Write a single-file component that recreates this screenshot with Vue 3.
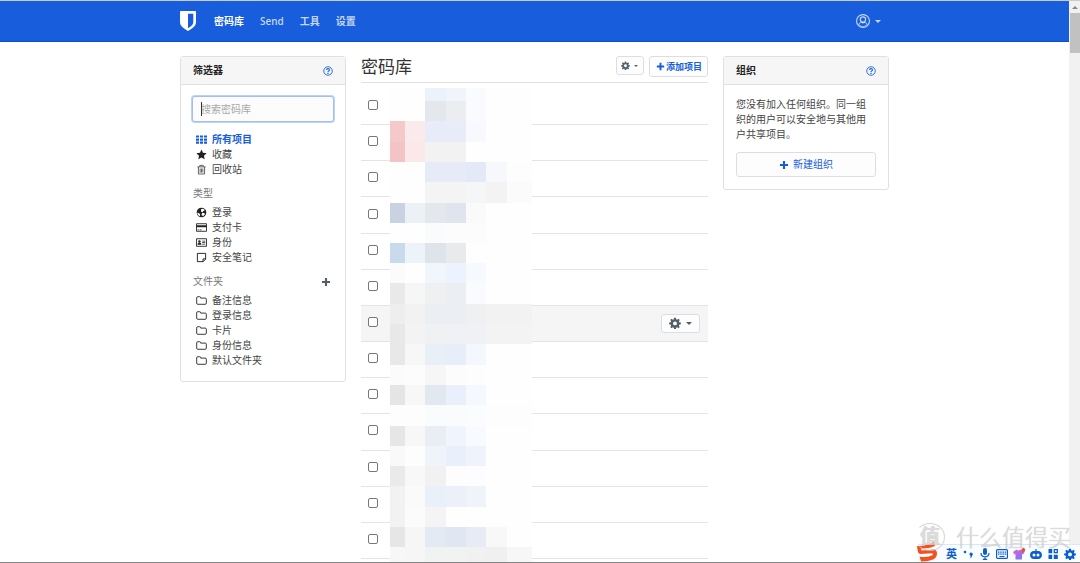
<script setup>
import { ref } from 'vue'

const search = ref('')
const nav = [
  { label: '密码库', active: true },
  { label: 'Send' },
  { label: '工具' },
  { label: '设置' },
]
const mainFilters = [
  { label: '所有项目', icon: 'grid', active: true },
  { label: '收藏', icon: 'star' },
  { label: '回收站', icon: 'trash' },
]
const types = [
  { label: '登录', icon: 'globe' },
  { label: '支付卡', icon: 'card' },
  { label: '身份', icon: 'id' },
  { label: '安全笔记', icon: 'note' },
]
const folders = ['备注信息', '登录信息', '卡片', '身份信息', '默认文件夹']
const rows = Array.from({ length: 13 }, (_, i) => ({ id: i + 1, hover: i === 6 }))

// Privacy mosaic over the item names
const xs = [0, 15, 35, 56, 76, 96, 117, 142]
const ys = [0, 13, 33, 54, 74, 94, 115, 135, 155, 175, 195, 216, 236, 256, 277, 297, 317, 338, 358, 378, 398, 419, 439, 459, 475]
const w = 'fefefe'
const colors = [
  [w, w, 'ecf2fb', 'f1f4fa', 'f9fbfe', w, w],
  [w, w, 'e4e8ec', 'ebedf1', 'f9fbfe', w, w],
  ['f5c8ca', 'fbeaeb', 'e7ecf8', 'e7ecf8', 'f7f9fe', w, w],
  ['f4c3c5', 'fbe8e9', 'f2f2f2', 'f2f2f2', w, w, w],
  [w, w, 'e6ebf7', 'e6ebf7', 'e3e9f6', 'f6f8fb', 'fdfdfe'],
  [w, w, 'f4f4f4', 'f4f4f5', 'f5f6f8', 'f3f3f3', 'fbfbfb'],
  ['c9d2e3', 'ecf1f6', 'e4e8ed', 'dfe4ef', 'fafafb', w, w],
  [w, w, 'fafbfc', 'fcfcfd', 'fcfcfd', w, w],
  ['c8daeb', 'edf4f9', 'dfe4ea', 'e9eaec', w, w, w],
  ['fbfbfb', w, 'f1f5fc', 'edf3fe', 'f6f9fe', w, w],
  ['e9e9e9', 'f6f6f6', 'eff0f1', 'ebeef2', 'fafbfe', w, w],
  ['eeeeee', 'f2f2f2', 'ebeef3', 'ebeef3', 'eff0f2', 'f2f2f2', 'f2f2f2'],
  ['e8e8e8', 'f3f3f3', 'f0f1f3', 'f0f1f4', 'eff1f4', 'f3f3f3', 'f3f3f3'],
  ['e8e8e8', 'f7f7f7', 'e9eff7', 'e7edf9', 'f4f7fd', w, w],
  ['fbfbfb', 'fcfcfc', 'f6f6f6', 'fcfcfc', 'fdfdfd', w, w],
  ['e5e5e5', 'f7f7f7', 'e2e8f0', 'e9effb', 'f5f8fe', w, w],
  ['fdfdfd', 'fdfdfd', 'fafbfd', 'fafbfd', 'fbfcfd', 'fdfdfd', 'fdfdfd'],
  ['e6e6e6', 'f7f7f7', 'eaedf3', 'f0f4fd', 'f8faff', w, w],
  ['f9f9f9', 'fdfdfd', 'eff3fa', 'e9effb', 'eff3fb', w, w],
  ['eaeaea', 'f8f8f8', 'f1f1f1', 'fdfdfd', 'fdfdff', w, w],
  ['f2f2f2', 'fafafa', 'eaf0f9', 'ebf0f9', 'eff4fa', w, w],
  ['f2f2f2', 'fbfbfb', 'f4f4f4', w, w, w, w],
  ['e6e6e6', 'f6f6f6', 'e4eaf3', 'e1e7f2', 'e6ebf5', 'f8f8f8', w],
  ['f7f7f7', 'f6f6f6', 'f1f2f2', 'f1f2f2', 'f1f1f1', 'f0f0f0', 'f7f7f7'],
]
const cells = colors.flatMap((row, r) =>
  row.map((c, i) => ({ key: r * 7 + i, x: xs[i], y: ys[r], w: xs[i + 1] - xs[i], h: ys[r + 1] - ys[r], fill: '#' + c })),
)
</script>

<template>
  <div class="window">
    <svg class="defs" aria-hidden="true">
      <symbol id="i-grid" viewBox="0 0 16 16"><path d="M0 2h4.400v3.200H0zM5.800 2h4.400v3.200H5.800zM11.600 2H16v3.200h-4.400zM0 6.500h4.400v3.200H0zM5.800 6.500h4.400v3.200H5.800zM11.600 6.500H16v3.200h-4.400zM0 11h4.400v3.200H0zM5.800 11h4.400v3.200H5.800zM11.600 11H16v3.200h-4.400z" /></symbol>
      <symbol id="i-star" viewBox="0 0 16 16"><path d="M8 .8l2.200 4.800 5.300.6-3.900 3.600 1 5.200L8 12.400 3.400 15l1-5.200L.5 6.200l5.300-.6z" /></symbol>
      <symbol id="i-trash" viewBox="0 0 16 16"><path d="M2 4.200h12M5.500 4V2h5v2M3.500 4.500v10h9v-10M6 6.500v6M8 6.500v6M10 6.500v6" fill="none" stroke="currentColor" stroke-width="1" /></symbol>
      <symbol id="i-globe" viewBox="0 0 16 16"><circle cx="8" cy="8" r="7" /><path d="M7.500 3l3-.6 2.500 2-2.200 1.400-1.500 2-1.500-.6-.5-2zM9.500 8.500l3 .5.500 1.500-2.500 2.700-2-.7-.5-2zM2 8l2.500 1 1.500 2-.5 2.500C3.500 12.500 2 10.500 2 8z" fill="#fff" /></symbol>
      <symbol id="i-card" viewBox="0 0 16 16"><path d="M.7 2.500h14.600v11H.7z" fill="none" stroke="currentColor" stroke-width="1.300" /><path d="M.7 4.800h14.600v2.800H.7zM2.300 10.800h2v1.200h-2zM5.200 10.800h3v1.200h-3z" /></symbol>
      <symbol id="i-id" viewBox="0 0 16 16"><path d="M.7 2.500h14.600v11H.7z" fill="none" stroke="currentColor" stroke-width="1.300" /><circle cx="5" cy="6.500" r="1.800" /><path d="M2.300 11.300V9.500L4 8.300h2l1.700 1.200v1.800zM9 5.500h4.500v1H9zM9 7.600h4.500v1H9zM9 9.800h4.500v1H9z" /></symbol>
      <symbol id="i-note" viewBox="0 0 16 16"><path d="M2 2h12v8.500L10.500 14H2zM14 10h-3.800v4" fill="none" stroke="currentColor" stroke-width="1.400" stroke-linejoin="round" /></symbol>
      <symbol id="i-folder" viewBox="0 0 16 16"><path d="M1 4q0-1.500 1.500-1.500H5.500Q6.800 2.500 6.800 4v.5h6.700Q15 4.500 15 6v6q0 1.500-1.500 1.500h-11Q1 13.500 1 12z" fill="none" stroke="currentColor" stroke-width="1.300" /></symbol>
      <symbol id="i-plus" viewBox="0 0 16 16"><path d="M6.300 1.500h3.400v4.800h4.800v3.400H9.700v4.800H6.300V9.700H1.500V6.300h4.800z" /></symbol>
      <symbol id="i-help" viewBox="0 0 16 16"><circle cx="8" cy="8" r="6.800" fill="none" stroke="currentColor" stroke-width="1.400" /><path d="M5.700 6.400C5.800 3.300 10.400 3.500 10.300 6.200 10.200 7.700 8.100 7.800 8 9.500" fill="none" stroke="currentColor" stroke-width="1.800" /><path d="M7 10.700h2v2H7z" /></symbol>
      <symbol id="i-gear" viewBox="0 0 16 16"><path fill-rule="evenodd" d="M6.800 1h2.400l.4 2 1.300.6 1.800-1.200 1.600 1.700-1.100 1.700.5 1.200 2.100.4v2.400l-2.100.4-.5 1.300 1.100 1.700-1.600 1.700-1.800-1.200-1.300.5-.4 2.100H6.800l-.4-2.100-1.300-.5-1.800 1.200-1.600-1.700 1.100-1.700-.5-1.300L.2 9.800V7.400L2.300 7l.5-1.200-1.100-1.700 1.600-1.700 1.800 1.200L6.400 3zM8 5.900a2.600 2.600 0 1 0 0 5.200 2.600 2.600 0 0 0 0-5.200z" /></symbol>
      <symbol id="i-user" viewBox="0 0 16 16"><circle cx="8" cy="8" r="8" /><circle cx="8" cy="8" r="6.700" fill="#175ddc" /><path d="M8 2.600c4.800 0 4.400 5.600 2.200 6.800 1.700.3 2.700 1.300 3 2.700-2.600 3.400-7.800 3.400-10.400 0 .3-1.400 1.300-2.400 3-2.700C3.600 8.200 3.200 2.600 8 2.600z" /><circle cx="8" cy="6.300" r="2.300" fill="#175ddc" /><path d="M3.800 12.300c.4-1.500 1.300-1.900 2.300-1.900q1.900.9 3.800 0c1 0 1.900.4 2.300 1.900-2.400 2.100-6 2.100-8.400 0z" fill="#175ddc" /></symbol>
    </svg>

    <div class="page">
      <header class="navbar">
        <div class="container bar">
          <a class="logo" href="#" aria-label="Bitwarden">
            <svg viewBox="0 0 16 20"><path d="M.7 0h14.600q.7 0 .7.700V11c0 4-3.500 6.500-8 9-4.500-2.500-8-5-8-9V.7Q0 0 .7 0z" fill="#fff" /><path d="M8 2.800h5.300V11c0 2.300-1.800 4-5.300 6.200z" fill="#175ddc" /></svg>
          </a>
          <nav>
            <a v-for="n in nav" :key="n.label" href="#" :class="{ active: n.active }">{{ n.label }}</a>
          </nav>
          <button class="account" type="button" aria-label="账户">
            <svg><use href="#i-user" /></svg><span class="caret"></span>
          </button>
        </div>
      </header>

      <main class="container columns">
        <aside class="card">
          <div class="card-header">
            <h2>筛选器</h2>
            <a href="#" aria-label="帮助"><svg class="icon"><use href="#i-help" /></svg></a>
          </div>
          <div class="filters">
            <div class="search-box">
              <input v-model="search" class="search" type="text" placeholder="搜索密码库" aria-label="搜索密码库" />
              <span class="cursor"></span>
            </div>
            <ul>
              <li v-for="f in mainFilters" :key="f.label">
                <a href="#" :class="{ active: f.active }"><svg class="icon"><use :href="'#i-' + f.icon" /></svg>{{ f.label }}</a>
              </li>
            </ul>
            <h3>类型</h3>
            <ul>
              <li v-for="t in types" :key="t.label">
                <a href="#"><svg class="icon"><use :href="'#i-' + t.icon" /></svg>{{ t.label }}</a>
              </li>
            </ul>
            <h3>文件夹
              <button type="button" aria-label="添加文件夹"><svg class="icon"><use href="#i-plus" /></svg></button>
            </h3>
            <ul>
              <li v-for="f in folders" :key="f">
                <a href="#"><svg class="icon"><use href="#i-folder" /></svg>{{ f }}</a>
              </li>
            </ul>
          </div>
        </aside>

        <section class="vault">
          <div class="vault-header">
            <h1>密码库</h1>
            <button class="btn small" type="button" aria-label="选项"><svg class="icon"><use href="#i-gear" /></svg><span class="caret"></span></button>
            <button class="btn add" type="button"><svg class="icon"><use href="#i-plus" /></svg>添加项目</button>
          </div>
          <div class="items">
            <div v-for="r in rows" :key="r.id" class="item" :class="{ hover: r.hover }">
              <input type="checkbox" :aria-label="'选择项目 ' + r.id" />
              <button v-if="r.hover" class="btn options" type="button" aria-label="项目选项"><svg><use href="#i-gear" /></svg><span class="caret"></span></button>
            </div>
            <svg class="mosaic" width="142" height="475" shape-rendering="crispEdges" aria-hidden="true">
              <rect v-for="c in cells" :key="c.key" :x="c.x" :y="c.y" :width="c.w" :height="c.h" :fill="c.fill" />
            </svg>
          </div>
        </section>

        <aside class="card">
          <div class="card-header">
            <h2>组织</h2>
            <a href="#" aria-label="帮助"><svg class="icon"><use href="#i-help" /></svg></a>
          </div>
          <div class="org">
            <p>您没有加入任何组织。同一组织的用户可以安全地与其他用户共享项目。</p>
            <button class="btn new-org" type="button"><svg class="icon"><use href="#i-plus" /></svg>新建组织</button>
          </div>
        </aside>
      </main>
    </div>

    <div class="scrollbar"><span class="arrow"></span><span class="thumb"></span></div>

    <div class="ime">
      <span class="lang">英</span>
      <svg viewBox="0 0 12 12"><circle cx="3" cy="4" r="1.300" /><path d="M7.500 6a1.600 1.600 0 1 1 2.800 1.200Q10 9.500 7.800 10.500q1-1.500.8-2.500Q7.500 7.500 7.500 6z" /></svg>
      <svg viewBox="0 0 12 12"><rect x="4" y="0" width="4" height="7" rx="2" /><path d="M2 5c0 5 8 5 8 0M6 8.500V12M3.800 11.300h4.400" fill="none" stroke="currentColor" stroke-width="1.200" /></svg>
      <svg viewBox="0 0 12 12"><rect x=".6" y="1.600" width="10.800" height="8.800" rx="1" fill="none" stroke="currentColor" stroke-width="1.200" /><path d="M2 3.400h1.500v1.300H2zM4.200 3.400h1.500v1.300H4.200zM6.400 3.400h1.500v1.300H6.400zM8.600 3.400h1.500v1.300H8.600zM2 5.500h1.500v1.300H2zM4.200 5.500h1.500v1.300H4.200zM6.400 5.500h1.500v1.300H6.400zM8.600 5.500h1.500v1.300H8.600zM3.500 7.900h5V9h-5z" /></svg>
      <svg viewBox="0 0 12 12"><defs><linearGradient id="shirt" x1="0" x2="1" y1="0" y2="1"><stop offset="0" stop-color="#f064b4" /><stop offset=".6" stop-color="#9b6cf2" /><stop offset="1" stop-color="#4c9cf5" /></linearGradient></defs><path d="M3.500 1.500q2 2 4 0L11.500 4 10 6.500 9 6v5.500H2.500V6L1.300 6.500 0 4z" fill="url(#shirt)" /><circle cx="10.300" cy="2" r="1.900" fill="#f04a2c" /></svg>
      <svg viewBox="0 0 12 12"><path d="M5.400 1h1.200v2H8c5.300 0 5.300 8 0 8H4c-5.300 0-5.300-8 0-8h1.400z" /><circle cx="4" cy="7" r="1.500" fill="#fff" /><circle cx="8" cy="7" r="1.500" fill="#fff" /></svg>
      <svg viewBox="0 0 12 12"><path d="M1.500 1h3.700v4.200H1.500zM1.500 6.800h3.700V11H1.500zM6.800 6.800h4V11h-4z" /><path d="M7.300 1.600h3v3h-3z" fill="none" stroke="currentColor" stroke-width="1.300" /></svg>
      <svg viewBox="0 0 16 16"><use href="#i-gear" /></svg>
    </div>
    <svg viewBox="0 0 22 20" class="sogou" aria-hidden="true"><path d="M1 4Q9 4.500 18 0l1 4Q12 7 5 6.500l.5 2L18 7.500q3 .5 3 4 0 4-4 6-6 2.500-12 2L3.500 14.500Q11 16 17 13l-.5-1.800L4 12q-2-.5-2.300-3z" fill="#f4511e" /></svg>
    <div class="watermark">
      <span class="badge">值</span><span>什么值得买</span>
    </div>
  </div>
</template>

<style>
html, body, #app { height: 100%; }
body { margin: 0; overflow: hidden; }
</style>

<style scoped>
* { box-sizing: border-box; }
.window {
  position: relative;
  display: flex;
  height: 100%;
  border-top: 1px solid #c9cdd3;
  border-bottom: 1px solid #858585;
  background: #fff;
  color: #444;
  font: 10px/15px "Open Sans", "Noto Sans CJK SC", sans-serif;
  overflow: hidden;
}
.defs { position: absolute; width: 0; height: 0; }
svg { fill: currentColor; flex: none; }
a { color: inherit; text-decoration: none; }
button { font: inherit; padding: 0; cursor: pointer; }
h1, h2, h3, p, ul { margin: 0; padding: 0; list-style: none; }
.icon { width: 11px; height: 11px; }
li .icon { color: #222; }
li .active .icon { color: #175ddc; }
.page { flex: 1; min-width: 0; display: flex; flex-direction: column; }
.container { width: 100%; max-width: 709px; margin: 0 auto; }
.navbar { background: #175ddc; border-bottom: 1px solid #0c4dcb; }
.bar { display: flex; align-items: center; height: 40px; }
.logo { display: flex; }
.logo svg { width: 16px; height: 20px; }
nav { display: flex; gap: 16px; margin-left: 18px; flex: 1; color: #c5d6f6; font-weight: 600; }
nav .active { color: #fff; font-weight: 700; }
.account { display: flex; align-items: center; gap: 5px; margin-right: 8px; border: 0; background: none; color: #c5d6f6; }
.account svg { width: 14px; height: 14px; }
.caret { border: 3px solid transparent; border-top-color: currentColor; border-bottom: 0; }
.columns { display: grid; grid-template-columns: 166fr 347fr 166fr; gap: 15px; flex: 1; padding-top: 14px; min-height: 0; }
.card { align-self: start; border: 1px solid #dfe1e5; border-radius: 3px; }
.card-header { display: flex; align-items: center; justify-content: space-between; padding: 6px 12px; background: #f6f6f6; border-bottom: 1px solid #dfe1e5; color: #175ddc; }
.card-header a { display: flex; }
.card-header .icon { width: 10px; height: 10px; }
h2 { color: #222; font-size: 10px; line-height: 15px; font-weight: 700; }
.filters { padding: 11px 12px 13px; }
.search-box { position: relative; margin: 0 -1px 10px; }
.search { display: block; width: 100%; height: 26px; padding: 0 8px; border: 1px solid #a3bff0; border-radius: 3px; outline: 0; box-shadow: 0 0 0 1px #bfd2f6; background: #fcfcfc; color: #333; font: inherit; }
.search::placeholder { color: #a8a8a8; opacity: 1; }
.cursor { position: absolute; left: 9px; top: 6px; width: 1px; height: 14px; background: #333; }
.filters ul { padding-left: 3px; }
li a { display: flex; align-items: center; gap: 5px; }
li .active { color: #175ddc; font-weight: 700; }
h3 { display: flex; align-items: center; justify-content: space-between; margin: 9px 0 4px; font-size: 10px; line-height: 15px; font-weight: 400; color: #777; }
h3 button { display: flex; border: 0; background: none; color: #52606a; margin-right: 2px; }
h3 .icon { width: 10px; height: 10px; }
.vault { display: flex; flex-direction: column; min-width: 0; min-height: 0; }
.vault-header { display: flex; align-items: flex-start; gap: 5px; height: 27px; border-bottom: 1px solid #dfe1e5; }
h1 { flex: 1; color: #333; font-size: 17px; line-height: 22px; font-weight: 400; }
.btn { display: flex; align-items: center; justify-content: center; border: 1px solid #dbdfe4; border-radius: 3px; background: #fdfdfd; color: #175ddc; }
.small { width: 28px; height: 19px; gap: 4px; color: #56616c; }
.small .icon { width: 9px; height: 9px; }
.small .caret { border-width: 2px; border-bottom: 0; }
.add { padding: 0 5px 0 6px; height: 21px; gap: 1px; font-size: 9px; font-weight: 700; }
.add .icon { width: 9px; height: 9px; }
.new-org .icon { width: 10px; height: 10px; }
.items { position: relative; flex: 1; display: grid; grid-auto-rows: 1fr; padding: 6px 0 3px; min-height: 0; }
.item { display: flex; align-items: center; justify-content: space-between; padding: 0 8px 0 7px; border-bottom: 1px solid #e2e4e7; min-height: 0; }
.hover { background: #f5f5f5; }
.item input { appearance: none; width: 10px; height: 10px; margin: 0 0 3px; border: 1px solid #777; border-radius: 2px; background: #fff; }
.options { width: 39px; height: 19px; gap: 5px; color: #52606a; }
.options svg { width: 12px; height: 12px; }
.mosaic { position: absolute; left: 29px; top: 5px; }
.org { padding: 12px; }
.org p { padding-right: 6px; line-height: 15px; }
.new-org { width: 100%; height: 25px; margin-top: 10px; gap: 4px; }
.scrollbar { width: 11px; background: #f1f1f1; display: flex; flex-direction: column; align-items: center; }
.arrow { margin: 5px 0 4px; border: 3px solid transparent; border-top: 0; border-bottom-color: #888; }
.thumb { width: 10px; height: 40px; background: #c1c1c1; }
.ime { position: absolute; right: 0; bottom: 0; display: flex; align-items: center; gap: 5px; height: 18px; padding: 0 4px 0 28px; border-top: 1px solid #d9e7f7; background: #fafdff; color: #0b5fcc; }
.ime svg { width: 12px; height: 12px; }
.lang { font-size: 11px; font-weight: 700; }
.watermark { position: absolute; right: 9px; bottom: 11px; display: flex; align-items: center; gap: 11px; color: #d4d4d4; font-size: 23px; line-height: 28px; font-weight: 300; text-shadow: 0 0 1px #aaa; opacity: 0.8; }
.badge { display: flex; align-items: center; justify-content: center; width: 30px; height: 28px; border: 1px solid #ccc; border-left-color: transparent; border-radius: 50%; font-size: 20px; font-weight: 700; }
.sogou { position: absolute; right: 142px; bottom: 0; width: 22px; height: 20px; }
</style>
